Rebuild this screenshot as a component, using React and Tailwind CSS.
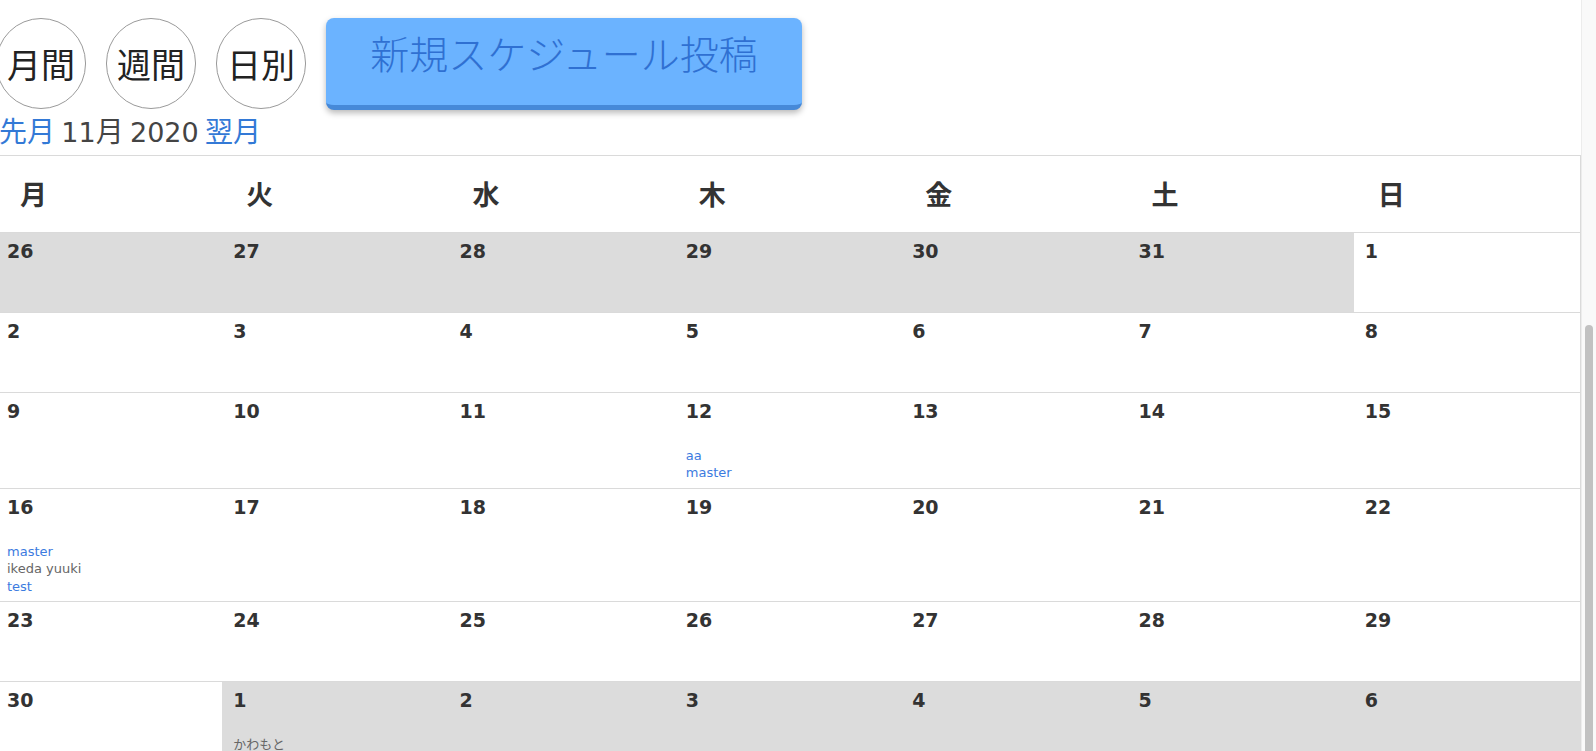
import React from 'react';

const weeks = [
    [
        { d: 26, out: true }, { d: 27, out: true }, { d: 28, out: true }, { d: 29, out: true },
        { d: 30, out: true }, { d: 31, out: true }, { d: 1 },
    ],
    [{ d: 2 }, { d: 3 }, { d: 4 }, { d: 5 }, { d: 6 }, { d: 7 }, { d: 8 }],
    [
        { d: 9 }, { d: 10 }, { d: 11 },
        { d: 12, events: [{ t: 'aa', link: true }, { t: 'master', link: true }] },
        { d: 13 }, { d: 14 }, { d: 15 },
    ],
    [
        { d: 16, events: [{ t: 'master', link: true }, { t: 'ikeda yuuki' }, { t: 'test', link: true }] },
        { d: 17 }, { d: 18 }, { d: 19 }, { d: 20 }, { d: 21 }, { d: 22 },
    ],
    [{ d: 23 }, { d: 24 }, { d: 25 }, { d: 26 }, { d: 27 }, { d: 28 }, { d: 29 }],
    [
        { d: 30 },
        { d: 1, out: true, events: [{ t: 'かわもと' }] },
        { d: 2, out: true }, { d: 3, out: true }, { d: 4, out: true }, { d: 5, out: true }, { d: 6, out: true },
    ],
];

const days = ['月', '火', '水', '木', '金', '土', '日'];

function Circle({ label }) {
    return (
        <button className="w-[90px] h-[91px] shrink-0 rounded-full border border-[#9a9a9a] bg-white flex items-center justify-center text-[34px] leading-none text-[#222]">
            {label}
        </button>
    );
}

export default function App() {
    return (
        <div className="flex h-[751px] overflow-hidden bg-white font-['Noto_Sans_CJK_JP',sans-serif]">
            <div className="flex-1 min-w-0 overflow-hidden">
                <div className="-ml-[4px]">
                    {/* view switch + new post */}
                    <div className="flex items-start gap-[20px] pt-[18px]">
                        <Circle label="月間" />
                        <Circle label="週間" />
                        <Circle label="日別" />
                        <button className="w-[476px] h-[92px] shrink-0 rounded-[8px] bg-[#6bb3ff] border-b-[5px] border-[#4689d8] shadow-[0_3px_6px_rgba(0,0,0,0.28)] flex justify-center pt-[15px] text-[39px] leading-[39px] font-light text-[#2f70d2]">
                            新規スケジュール投稿
                        </button>
                    </div>

                    {/* month nav */}
                    <div className="pl-[3px] mt-[2px] mb-[7px] h-[36px] text-[28px] leading-[36px] text-[#444] whitespace-pre">
                        <a className="text-[#3379d6]">先月</a>{' '}
                        <span className="font-['DejaVu_Sans',sans-serif] text-[27px]">11</span>月{' '}
                        <span className="font-['DejaVu_Sans',sans-serif] text-[27px]">2020</span>{' '}
                        <a className="text-[#3379d6]">翌月</a>
                    </div>

                    {/* calendar */}
                    <div className="border-t border-r border-[#dadada]">
                        <div className="grid grid-cols-7 h-[77px] border-b border-[#dadada]">
                            {days.map((d) => (
                                <div key={d} className="flex items-center pl-[24px] text-[27px] font-bold text-[#333]">
                                    {d}
                                </div>
                            ))}
                        </div>

                        {weeks.map((week, i) => (
                            <div key={i} className="grid grid-cols-7 border-b border-[#dadada]">
                                {week.map((c, j) => (
                                    <div
                                        key={j}
                                        className={`min-h-[79px] px-[11px] pt-[7px] pb-[6px] ${c.out ? 'bg-[#dcdcdc]' : 'bg-white'}`}
                                    >
                                        <div className="h-[22px] text-[19px] leading-[22px] font-bold text-[#333] font-['DejaVu_Sans',sans-serif]">
                                            {c.d}
                                        </div>
                                        <div className="mt-[25px] text-[13px] leading-[17.4px] font-['DejaVu_Sans','Noto_Sans_CJK_JP',sans-serif]">
                                            {(c.events || []).map((e, k) => (
                                                <div key={k} className={e.link ? 'text-[#3c7be0]' : 'text-[#666]'}>
                                                    {e.t}
                                                </div>
                                            ))}
                                        </div>
                                    </div>
                                ))}
                            </div>
                        ))}
                    </div>
                </div>
            </div>

            {/* scrollbar */}
            <div className="w-[15px] shrink-0 bg-[#f9f9f9] border-l border-[#ececec] flex justify-center pt-[325px]">
                <div className="w-[8px] h-[500px] rounded-full bg-[#c1c1c1]" />
            </div>
        </div>
    );
}
